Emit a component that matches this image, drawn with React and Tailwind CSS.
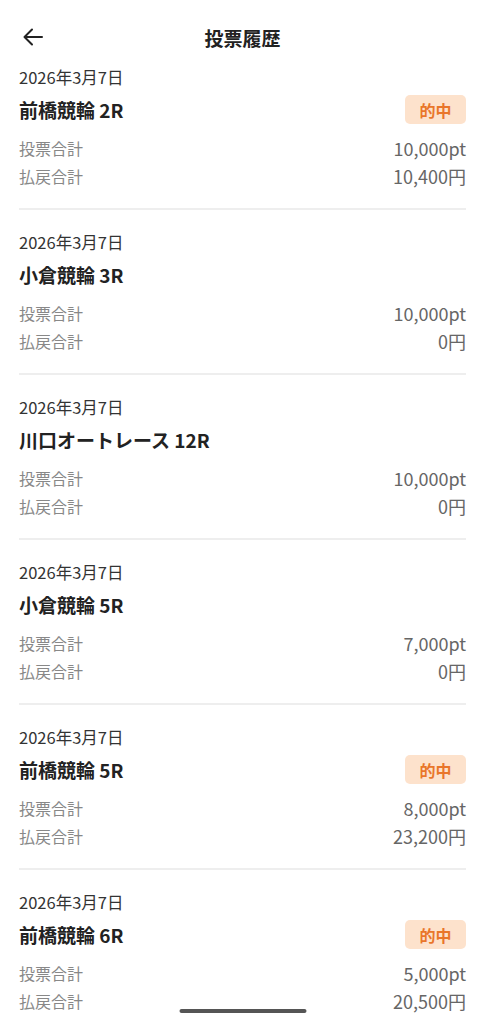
import React from "react";

const items = [
  { date: "2026年3月7日", title: "前橋競輪 2R", hit: true, bet: "10,000pt", pay: "10,400円" },
  { date: "2026年3月7日", title: "小倉競輪 3R", hit: false, bet: "10,000pt", pay: "0円" },
  { date: "2026年3月7日", title: "川口オートレース 12R", hit: false, bet: "10,000pt", pay: "0円" },
  { date: "2026年3月7日", title: "小倉競輪 5R", hit: false, bet: "7,000pt", pay: "0円" },
  { date: "2026年3月7日", title: "前橋競輪 5R", hit: true, bet: "8,000pt", pay: "23,200円" },
  { date: "2026年3月7日", title: "前橋競輪 6R", hit: true, bet: "5,000pt", pay: "20,500円" },
];

export default function App() {
  return (
    <div
      className="min-h-screen w-full bg-white"
      style={{ fontFamily: '"Noto Sans CJK JP", "Noto Sans", sans-serif' }}
    >
      <header className="relative flex h-[50px] items-start justify-center pt-[26px]">
        <button className="absolute left-[22px] top-[26px] flex h-[22px] w-[22px] items-center justify-center">
          <svg width="22" height="22" viewBox="0 0 22 22" fill="none" stroke="#222" strokeWidth="2" strokeLinecap="round" strokeLinejoin="round">
            <path d="M20 11H3" />
            <path d="M10 3.5L2.5 11L10 18.5" />
          </svg>
        </button>
        <h1 className="text-[19px] font-bold leading-[24px] text-[#222]">投票履歴</h1>
      </header>
      <div className="px-[19px]">
        {items.map((it, i) => (
          <div
            key={i}
            className={`${i === 0 ? "pt-[15px]" : "border-t-2 border-[#eeeeee] pt-[20px]"} pb-[18px]`}
          >
            <div className="text-[16.5px] leading-[24px] text-[#333]">{it.date}</div>
            <div className="mt-[6px] flex h-[29px] items-center justify-between">
              <div className="text-[19px] font-bold leading-[29px] text-[#222]">{it.title}</div>
              {it.hit && (
                <div className="flex h-[29px] w-[61px] items-center justify-center rounded-[5px] bg-[#fde2cc] text-[16px] font-bold text-[#e9762a]">
                  的中
                </div>
              )}
            </div>
            <div className="mt-[10px] flex items-center justify-between leading-[28px]">
              <span className="text-[16px] text-[#888]">投票合計</span>
              <span className="text-[18px] text-[#666]">{it.bet}</span>
            </div>
            <div className="flex items-center justify-between leading-[28px]">
              <span className="text-[16px] text-[#888]">払戻合計</span>
              <span className="text-[18px] text-[#666]">{it.pay}</span>
            </div>
          </div>
        ))}
      </div>
      <div className="fixed bottom-[11px] left-1/2 h-[4px] w-[127px] -translate-x-1/2 rounded-full bg-[#555]" />
    </div>
  );
}
